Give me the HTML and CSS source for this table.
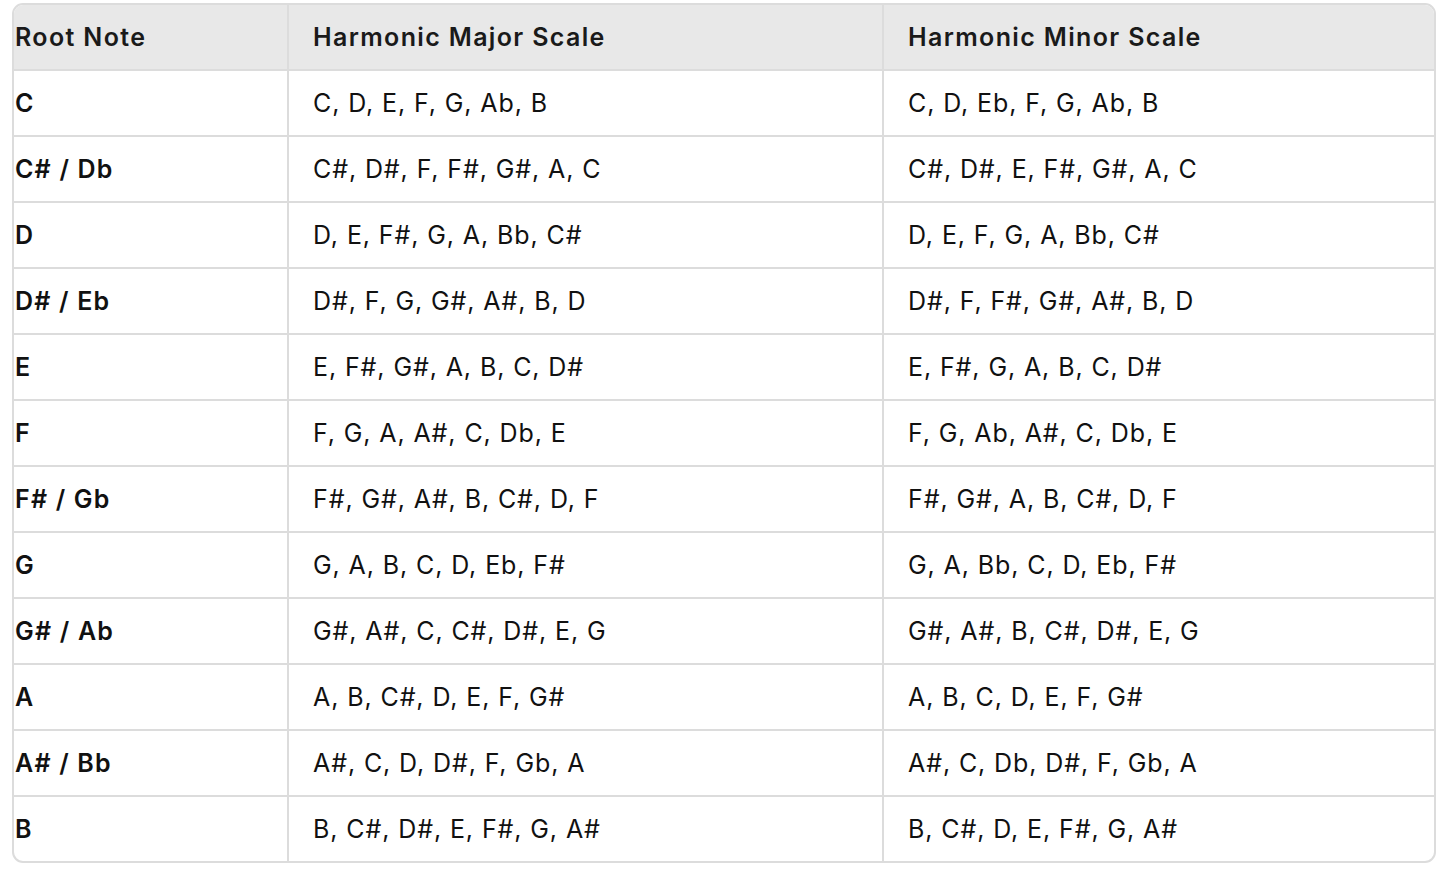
FILE: index.html
```html
<!DOCTYPE html>
<html>
<head>
<meta charset="utf-8">
<link rel="stylesheet" href="styles.css">
</head>
<body>
<div class="wrap">
<table class="scales">
<colgroup><col class="c1"><col class="c2"><col class="c3"></colgroup>
<thead>
<tr><th>Root Note</th><th>Harmonic Major Scale</th><th>Harmonic Minor Scale</th></tr>
</thead>
<tbody>
<tr><td>C</td><td>C, D, E, F, G, Ab, B</td><td>C, D, Eb, F, G, Ab, B</td></tr>
<tr><td>C# / Db</td><td>C#, D#, F, F#, G#, A, C</td><td>C#, D#, E, F#, G#, A, C</td></tr>
<tr><td>D</td><td>D, E, F#, G, A, Bb, C#</td><td>D, E, F, G, A, Bb, C#</td></tr>
<tr><td>D# / Eb</td><td>D#, F, G, G#, A#, B, D</td><td>D#, F, F#, G#, A#, B, D</td></tr>
<tr><td>E</td><td>E, F#, G#, A, B, C, D#</td><td>E, F#, G, A, B, C, D#</td></tr>
<tr><td>F</td><td>F, G, A, A#, C, Db, E</td><td>F, G, Ab, A#, C, Db, E</td></tr>
<tr><td>F# / Gb</td><td>F#, G#, A#, B, C#, D, F</td><td>F#, G#, A, B, C#, D, F</td></tr>
<tr><td>G</td><td>G, A, B, C, D, Eb, F#</td><td>G, A, Bb, C, D, Eb, F#</td></tr>
<tr><td>G# / Ab</td><td>G#, A#, C, C#, D#, E, G</td><td>G#, A#, B, C#, D#, E, G</td></tr>
<tr><td>A</td><td>A, B, C#, D, E, F, G#</td><td>A, B, C, D, E, F, G#</td></tr>
<tr><td>A# / Bb</td><td>A#, C, D, D#, F, Gb, A</td><td>A#, C, Db, D#, F, Gb, A</td></tr>
<tr><td>B</td><td>B, C#, D#, E, F#, G, A#</td><td>B, C#, D, E, F#, G, A#</td></tr>
</tbody>
</table>
</div>
</body>
</html>
```
FILE: styles.css
```css
html, body {
  margin: 0;
  padding: 0;
  background: #ffffff;
}
.wrap {
  padding: 3px 12px 0 12px;
}
.scales {
  width: 1424px;
  border-collapse: separate;
  border-spacing: 0;
  border: 2px solid #dcdcdc;
  border-radius: 11px;
  overflow: hidden;
  font-family: Inter, "Noto Sans", sans-serif;
  font-size: 25px;
  letter-spacing: 0.9px;
  color: #111111;
  table-layout: fixed;
}
.c1 { width: 273px; }
.c2 { width: 595px; }
.c3 { width: auto; }
.scales th, .scales td {
  height: 64px;
  padding: 0 0 0 24px;
  text-align: left;
  vertical-align: middle;
  border-bottom: 2px solid #dcdcdc;
  border-left: 2px solid #dcdcdc;
}
.scales th {
  background: #e8e8e8;
  font-weight: 600;
  letter-spacing: 1.35px;
  color: #1a1a1a;
}
.scales th:first-child, .scales td:first-child {
  border-left: none;
  padding-left: 1px;
}
.scales td:first-child {
  font-weight: 600;
  letter-spacing: 1.2px;
}
.scales tbody tr:last-child td {
  border-bottom: none;
}
```
